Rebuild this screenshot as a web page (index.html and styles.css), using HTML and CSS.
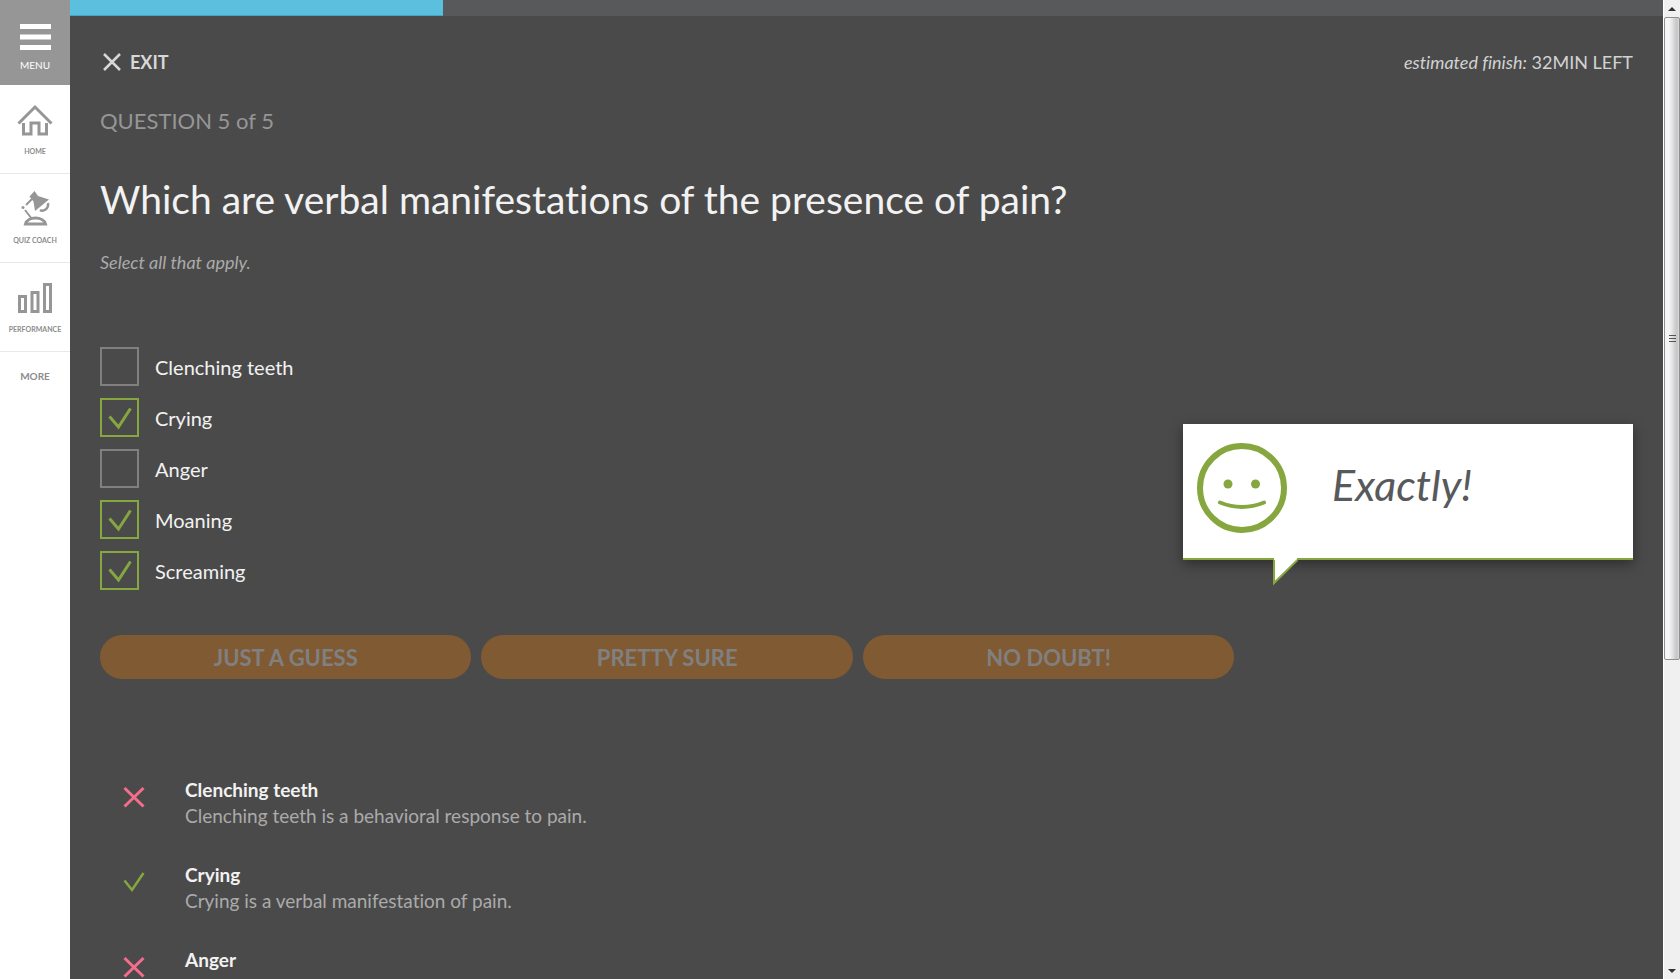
FILE: index.html
```html
<!DOCTYPE html>
<html lang="en">
<head>
<meta charset="utf-8">
<title>Quiz Coach</title>
<link rel="stylesheet" href="styles.css">
</head>
<body>
<nav class="sidebar">
  <button class="menu" type="button">
    <svg width="31" height="27" viewBox="0 0 31 27"><path d="M0 2.500h31M0 13h31M0 23.500h31" stroke="#fff" stroke-width="5"/></svg>
    MENU
  </button>
  <a class="nav-item" href="#home">
    <svg width="36" height="34" viewBox="0 0 36 34" fill="none" stroke="#969696" stroke-width="3"><path d="M1.500 21.500L18 5l16.500 16.500"/><path d="M6.500 21v11h7.500V21h8v11h7.500V21"/></svg>
    HOME
  </a>
  <a class="nav-item" href="#quiz">
    <svg width="36" height="36" viewBox="0 0 36 36"><path d="M12.500 5.500L17.500 0l3.500 5 11 3.500L18 20l-1.500-9.500z" fill="#969696"/><path d="M31 12c1 6-5 9-8 7" fill="none" stroke="#969696" stroke-width="2.500"/><path d="M15 8l-6 6M8 19l7 9" stroke="#969696" stroke-width="2"/><circle cx="6" cy="16.500" r="1.500" fill="#969696"/><path d="M8.500 33c2-8 18-8 20 0z" fill="none" stroke="#969696" stroke-width="3"/></svg>
    QUIZ COACH
  </a>
  <a class="nav-item" href="#performance">
    <svg width="36" height="34" viewBox="0 0 36 34" fill="none" stroke="#969696" stroke-width="3"><path d="M2.500 16.500h6v15h-6zM15 12.500h6v19h-6zM27.500 4.500h6v27h-6z"/></svg>
    PERFORMANCE
  </a>
  <a class="more" href="#more">MORE</a>
</nav>

<main class="quiz">
  <div class="progress" role="progressbar" aria-label="Quiz progress"><div class="progress-fill"></div></div>
  <div class="content">
    <header class="topbar">
      <button class="exit" type="button">
        <svg width="20" height="20" viewBox="0 0 20 20"><path d="M2 2l16 16M18 2L2 18" stroke="#d8d8d8" stroke-width="2.500"/></svg>
        EXIT
      </button>
      <p class="finish"><em>estimated finish:</em> 32MIN LEFT</p>
    </header>
    <p class="counter">QUESTION 5 of 5</p>
    <h1 class="title">Which are verbal manifestations of the presence of pain?</h1>
    <p class="hint">Select all that apply.</p>

    <div class="answer">
      <div class="options">
        <label class="option"><input type="checkbox">Clenching teeth</label>
        <label class="option"><input type="checkbox" checked>Crying</label>
        <label class="option"><input type="checkbox">Anger</label>
        <label class="option"><input type="checkbox" checked>Moaning</label>
        <label class="option"><input type="checkbox" checked>Screaming</label>
      </div>
      <aside class="feedback">
        <svg class="face" width="90" height="90" viewBox="0 0 90 90" fill="none" stroke="#86a73f"><circle cx="45" cy="45" r="42" stroke-width="6"/><path d="M23 59.500q22 9 44 0" stroke-width="4" stroke-linecap="round"/><g fill="#86a73f" stroke="none"><circle cx="31" cy="41" r="4.500"/><circle cx="58.500" cy="41" r="4.500"/></g></svg>
        <span>Exactly!</span>
        <svg class="tail" width="26" height="28" viewBox="0 0 26 28"><path d="M1 0v25L24 2V0z" fill="#fff"/><path d="M1 2v23L24.500 2" fill="none" stroke="#86a73f" stroke-width="2"/></svg>
      </aside>
    </div>

    <div class="confidence">
      <button type="button" disabled>JUST A GUESS</button>
      <button type="button" disabled>PRETTY SURE</button>
      <button type="button" disabled>NO DOUBT!</button>
    </div>

    <ul class="review">
      <li>
        <svg class="mark" width="22" height="22" viewBox="0 0 22 22"><path d="M1.500 2l19 18.500M20.500 2l-19 18.500" stroke="#f46e8c" stroke-width="3"/></svg>
        <div><h2>Clenching teeth</h2><p>Clenching teeth is a behavioral response to pain.</p></div>
      </li>
      <li>
        <svg class="mark" width="22" height="22" viewBox="0 0 22 22"><path d="M1.500 9.500l7.500 9.500L20.500 2" fill="none" stroke="#86a73f" stroke-width="2.500"/></svg>
        <div><h2>Crying</h2><p>Crying is a verbal manifestation of pain.</p></div>
      </li>
      <li>
        <svg class="mark" width="22" height="22" viewBox="0 0 22 22"><path d="M1.500 2l19 18.500M20.500 2l-19 18.500" stroke="#f46e8c" stroke-width="3"/></svg>
        <div><h2>Anger</h2><p>Anger is a psychological response to pain.</p></div>
      </li>
    </ul>
  </div>
</main>

<div class="scrollbar" aria-hidden="true">
  <svg class="arrow" width="16" height="17" viewBox="0 0 16 17"><path d="M4 11l4-4 4 4z" fill="#333"/></svg>
  <div class="thumb"><svg width="9" height="9" viewBox="0 0 9 9"><path d="M1 1.500h7M1 4.500h7M1 7.500h7" stroke="#555"/></svg></div>
  <svg class="arrow" width="16" height="17" viewBox="0 0 16 17"><path d="M4 7h8l-4 4z" fill="#333"/></svg>
</div>
</body>
</html>
```
FILE: styles.css
```css
* { box-sizing: border-box; }

body {
  display: flex;
  height: 100vh;
  margin: 0;
  overflow: hidden;
  background: #4a4a4a;
  color: #f2f2f2;
  font-family: Lato, sans-serif;
  font-variant-ligatures: no-common-ligatures;
}

h1, h2, p, ul { margin: 0; padding: 0; }
button { border: 0; padding: 0; font: inherit; }

.sidebar {
  display: flex;
  flex-direction: column;
  flex: 0 0 70px;
  background: #fff;
}

.menu {
  display: flex;
  flex-direction: column;
  align-items: center;
  gap: 8px;
  height: 85px;
  padding-top: 24px;
  background: #969696;
  color: #fff;
  font-size: 10px;
  line-height: 12px;
}

.nav-item {
  display: flex;
  flex-direction: column;
  align-items: center;
  justify-content: space-between;
  height: 89px;
  padding: 17px 0;
  border-bottom: 1px solid #e8e8e8;
  color: #8c8c8c;
  font-size: 7px;
  font-weight: 700;
  line-height: 10px;
  text-decoration: none;
}

.more {
  padding-top: 18px;
  color: #8c8c8c;
  font-size: 10px;
  font-weight: 700;
  line-height: 12px;
  text-align: center;
  text-decoration: none;
}

.quiz { flex: 1; min-width: 0; }

.progress {
  height: 16px;
  background: #58595b;
}

.progress-fill {
  width: 23.4%;
  height: 100%;
  background: #5bc0de;
  border-bottom: 1px solid #46a5c2;
}

.content { padding: 34px 30px 0; }

.topbar {
  display: flex;
  justify-content: space-between;
  align-items: center;
  height: 24px;
}

.exit {
  display: flex;
  align-items: center;
  gap: 8px;
  padding-left: 2px;
  background: none;
  color: #d8d8d8;
  font-size: 18px;
  font-weight: 700;
}

.finish { color: #d2d2d2; font-size: 18px; }

.counter {
  margin-top: 33px;
  color: #969696;
  font-size: 22px;
  line-height: 28px;
}

.title {
  margin-top: 39px;
  font-size: 39px;
  font-weight: 400;
  line-height: 50px;
}

.hint {
  margin-top: 26px;
  color: #aaa;
  font-size: 18px;
  font-style: italic;
  line-height: 24px;
}

.answer {
  display: flex;
  justify-content: space-between;
  margin-top: 73px;
}

.options {
  display: flex;
  flex-direction: column;
  gap: 12px;
}

.option {
  display: flex;
  align-items: center;
  gap: 16px;
  font-size: 20px;
}

.option input {
  appearance: none;
  width: 39px;
  height: 39px;
  margin: 0;
  border: 2px solid #808080;
}

.option input:checked {
  border-color: #86a73f;
  background: url("data:image/svg+xml,%3Csvg xmlns='http://www.w3.org/2000/svg' viewBox='0 0 35 35'%3E%3Cpath d='M7.500 16.500l9 10.500L28.500 8.500' fill='none' stroke='%2386a73f' stroke-width='3'/%3E%3C/svg%3E") center / 35px 35px no-repeat;
}

.feedback {
  position: relative;
  display: flex;
  gap: 45px;
  width: 450px;
  height: 136px;
  margin-top: 77px;
  padding: 19px 14px;
  border-bottom: 2px solid #86a73f;
  background: #fff;
  box-shadow: 0 4px 12px rgba(0, 0, 0, .4);
  color: #58595b;
  font-size: 43px;
  font-style: italic;
  line-height: 84px;
}

.tail {
  position: absolute;
  top: 134px;
  left: 90px;
}

.confidence {
  display: grid;
  grid-template-columns: repeat(3, 1fr);
  gap: 10px;
  width: 74%;
  margin-top: 45px;
}

.confidence button {
  height: 44px;
  border-radius: 22px;
  background: #805a33;
  color: #808080;
  font-size: 22px;
  font-weight: 700;
}

.review {
  display: flex;
  flex-direction: column;
  gap: 33px;
  margin-top: 98px;
  padding-left: 23px;
  list-style: none;
}

.review li {
  display: flex;
  gap: 40px;
}

.mark { margin-top: 9px; }

.review h2 {
  font-size: 19px;
  font-weight: 700;
  line-height: 26px;
}

.review p {
  color: #aaa;
  font-size: 19px;
  line-height: 26px;
}

.scrollbar {
  display: flex;
  flex-direction: column;
  flex: 0 0 17px;
  border-left: 1px solid #fff;
  background: #f0f0f0;
}

.arrow { flex: none; }

.thumb {
  display: flex;
  flex: 0 0 65.7%;
  align-items: center;
  justify-content: center;
  border: 1px solid #8f8f8f;
  border-radius: 2px;
  background: linear-gradient(90deg, #f6f6f6 30%, #c4c4c8 85%, #dcdcdc);
}

.arrow:last-child { margin-top: auto; }
```
